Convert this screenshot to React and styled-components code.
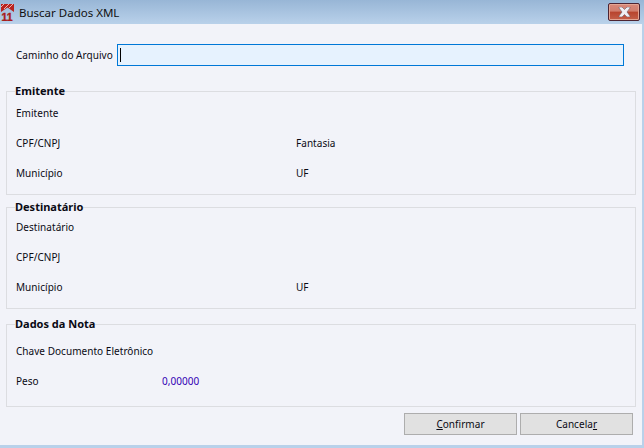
import React from "react";
import styled, { createGlobalStyle } from "styled-components";

const Global = createGlobalStyle`
  html, body { margin: 0; padding: 0; background: #b9d1ea; }
  body { font-family: "Noto Sans", "DejaVu Sans", sans-serif; font-size: 10px; letter-spacing: 0.04px; color: #0a0a14; }
`;

const Window = styled.div`
  width: 644px;
  height: 448px;
  display: flex;
  flex-direction: column;
  overflow: hidden;
  background: #b9d1ea;
  padding: 0 2px 3px 0;
  box-sizing: border-box;
`;

const TitleBar = styled.header`
  flex: 0 0 24px;
  margin-right: -2px;
  padding: 0 4px 0 0;
  display: flex;
  align-items: center;
  gap: 4px;
  background: linear-gradient(#98b6d6, #b9d1ea);
`;

const Title = styled.span`
  flex: 1;
  font-size: 11.5px;
  letter-spacing: 0;
  color: #111;
`;

const CloseButton = styled.div`
  width: 32px;
  height: 18px;
  box-sizing: border-box;
  display: flex;
  align-items: center;
  justify-content: center;
  border: 1px solid #4d2432;
  border-radius: 2px;
  box-shadow: inset 0 0 0 1px #e4a593;
  background: linear-gradient(#d9897a 0%, #d07d6d 45%, #b8442e 50%, #c4604a 100%);
`;

const Client = styled.main`
  flex: 1;
  background: #f2f3f9;
  display: flex;
  flex-direction: column;
  padding: 20px 6px 0 6px;
  min-height: 0;
`;

const PathRow = styled.div`
  display: flex;
  align-items: center;
  height: 22px;
  padding-left: 10px;
  margin-bottom: 18px;
`;

const PathLabel = styled.label`
  width: 101px;
  white-space: nowrap;
`;

const PathInput = styled.div`
  width: 507px;
  height: 22px;
  box-sizing: border-box;
  border: 1px solid #0078d7;
  background: #e6f2fe;
  display: flex;
  align-items: center;
  padding-left: 2px;
`;

const Caret = styled.span`
  width: 1px;
  height: 14px;
  background: #000;
`;

const Group = styled.fieldset`
  margin: 0 0 ${(p) => p.$after}px;
  padding: ${(p) => p.$shift || 0}px 0 0 9px;
  height: ${(p) => p.$height}px;
  box-sizing: border-box;
  border: 1px solid #dcdde1;
  min-width: 0;
`;

const GroupTitle = styled.legend`
  padding: 0;
  margin-left: -1px;
  font-size: 11px;
  font-weight: 700;
  line-height: 14px;
  letter-spacing: 0;
  color: #0a0a14;
`;

const Row = styled.div`
  display: grid;
  grid-template-columns: ${(p) => p.$columns || "280px 1fr"};
  align-items: center;
  height: 30px;
  margin-top: ${(p) => p.$pull || 0}px;
`;

const Value = styled.span`
  color: #3300b4;
`;

const Footer = styled.footer`
  display: flex;
  justify-content: flex-end;
  gap: 3px;
  padding-right: 3px;
`;

const Button = styled.button`
  width: 113px;
  height: 22px;
  padding: 0;
  border: 1px solid #adadad;
  border-radius: 0;
  background: #e1e1e1;
  font: inherit;
  letter-spacing: inherit;
  color: #0a0a14;
`;

const Key = styled.span`
  text-decoration: underline;
`;

const Logo = () => (
  <svg width="15" height="18" viewBox="0 0 15 18">
    <path d="M1 1H14V9L7.500 4.500 1 9Z" fill="#b8231f" />
    <path d="M1 4L4 1M4 6L9 1M9 5L13 1" stroke="#f0b0a8" strokeWidth="1" fill="none" />
    <text x="1.500" y="17.500" fontFamily="Liberation Sans, sans-serif" fontWeight="700" fontSize="10.500" fill="#a81c1c" stroke="#a81c1c" strokeWidth=".4">11</text>
  </svg>
);

const CloseGlyph = () => (
  <svg width="13" height="10" viewBox="0 0 13 10">
    <path d="M1 0h3l2.500 2.500L9 0h3v1L9 5l3 4v1H9L6.500 7.500 4 10H1V9l3-4-3-4z" fill="#f0f0f4" stroke="#6b5a66" strokeWidth=".6" />
  </svg>
);

export default function App() {
  return (
    <>
      <Global />
      <Window>
        <TitleBar>
          <Logo />
          <Title>Buscar Dados XML</Title>
          <CloseButton><CloseGlyph /></CloseButton>
        </TitleBar>
        <Client>
          <PathRow>
            <PathLabel>Caminho do Arquivo</PathLabel>
            <PathInput><Caret /></PathInput>
          </PathRow>
          <Group $height={111} $after={5}>
            <GroupTitle>Emitente</GroupTitle>
            <Row>Emitente</Row>
            <Row><span>CPF/CNPJ</span><span>Fantasia</span></Row>
            <Row><span>Município</span><span>UF</span></Row>
          </Group>
          <Group $height={109} $after={8}>
            <GroupTitle>Destinatário</GroupTitle>
            <Row $pull={-2}>Destinatário</Row>
            <Row>CPF/CNPJ</Row>
            <Row><span>Município</span><span>UF</span></Row>
          </Group>
          <Group $height={90} $after={6} $shift={5}>
            <GroupTitle>Dados da Nota</GroupTitle>
            <Row>Chave Documento Eletrônico</Row>
            <Row $columns="146px 1fr"><span>Peso</span><Value>0,00000</Value></Row>
          </Group>
          <Footer>
            <Button><Key>C</Key>onfirmar</Button>
            <Button>Cancela<Key>r</Key></Button>
          </Footer>
        </Client>
      </Window>
    </>
  );
}
